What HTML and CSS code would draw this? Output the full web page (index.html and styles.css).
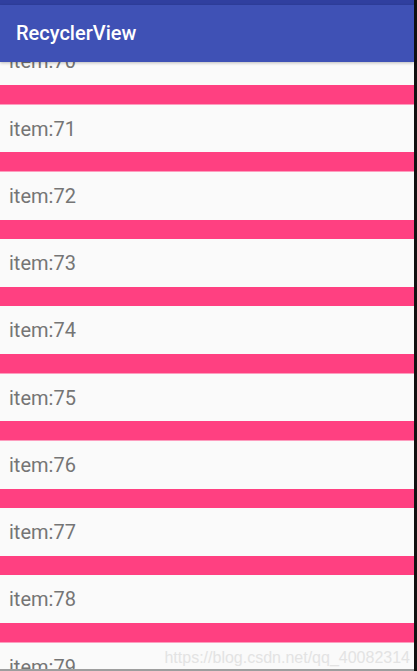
FILE: index.html
```html
<!DOCTYPE html>
<html lang="en">
<head>
    <meta charset="UTF-8">
    <meta name="viewport" content="width=device-width, initial-scale=1.0">
    <title>RecyclerView</title>
    <link rel="stylesheet" href="styles.css">
</head>
<body>
    <div class="screen">
        <div class="phone">
            <div class="status-bar"></div>
            <header class="app-bar">RecyclerView</header>
            <div class="list-viewport">
                <ul class="item-list">
                    <li class="item">item:70</li>
                    <li class="item">item:71</li>
                    <li class="item">item:72</li>
                    <li class="item">item:73</li>
                    <li class="item">item:74</li>
                    <li class="item">item:75</li>
                    <li class="item">item:76</li>
                    <li class="item">item:77</li>
                    <li class="item">item:78</li>
                    <li class="item">item:79</li>
                </ul>
                <div class="watermark">https://blog.csdn.net/qq_40082314</div>
            </div>
            <div class="bottom-line"></div>
        </div>
        <div class="edge"></div>
    </div>
</body>
</html>
```

FILE: styles.css
```css
html, body {
    margin: 0;
    padding: 0;
    height: 100%;
    overflow: hidden;
}

body {
    font-family: Roboto, 'Noto Sans', sans-serif;
    background-color: #fafafa;
}

.screen {
    display: flex;
    height: 671px;
}

.phone {
    flex: 1;
    display: flex;
    flex-direction: column;
    min-width: 0;
}

.edge {
    width: 3px;
    background-color: #111;
}

.status-bar {
    height: 5px;
    background-color: #303f9f;
    position: relative;
    z-index: 2;
}

.app-bar {
    height: 57px;
    box-sizing: border-box;
    padding: 0 0 2px 16px;
    display: flex;
    align-items: center;
    background-color: #3f51b5;
    color: #ffffff;
    font-size: 20px;
    font-weight: 500;
    position: relative;
    z-index: 2;
    box-shadow: 0 1px 3px rgba(0, 0, 0, 0.25);
}

.list-viewport {
    flex: 1;
    overflow: hidden;
    position: relative;
}

.item-list {
    list-style: none;
    margin: -24.75px 0 0 0;
    padding: 0;
}

.item {
    height: 47.75px;
    line-height: 49px;
    padding-left: 9px;
    margin-bottom: 19.5px;
    background-color: #fafafa;
    color: #757575;
    font-size: 20px;
    box-shadow: 0 19.5px 0 #ff4081;
}

.watermark {
    position: absolute;
    right: 4px;
    bottom: 2px;
    color: #e3e3e3;
    font-family: 'Liberation Sans', Arial, sans-serif;
    font-size: 16px;
}

.bottom-line {
    height: 2px;
    background-color: #9e9e9e;
}
```
